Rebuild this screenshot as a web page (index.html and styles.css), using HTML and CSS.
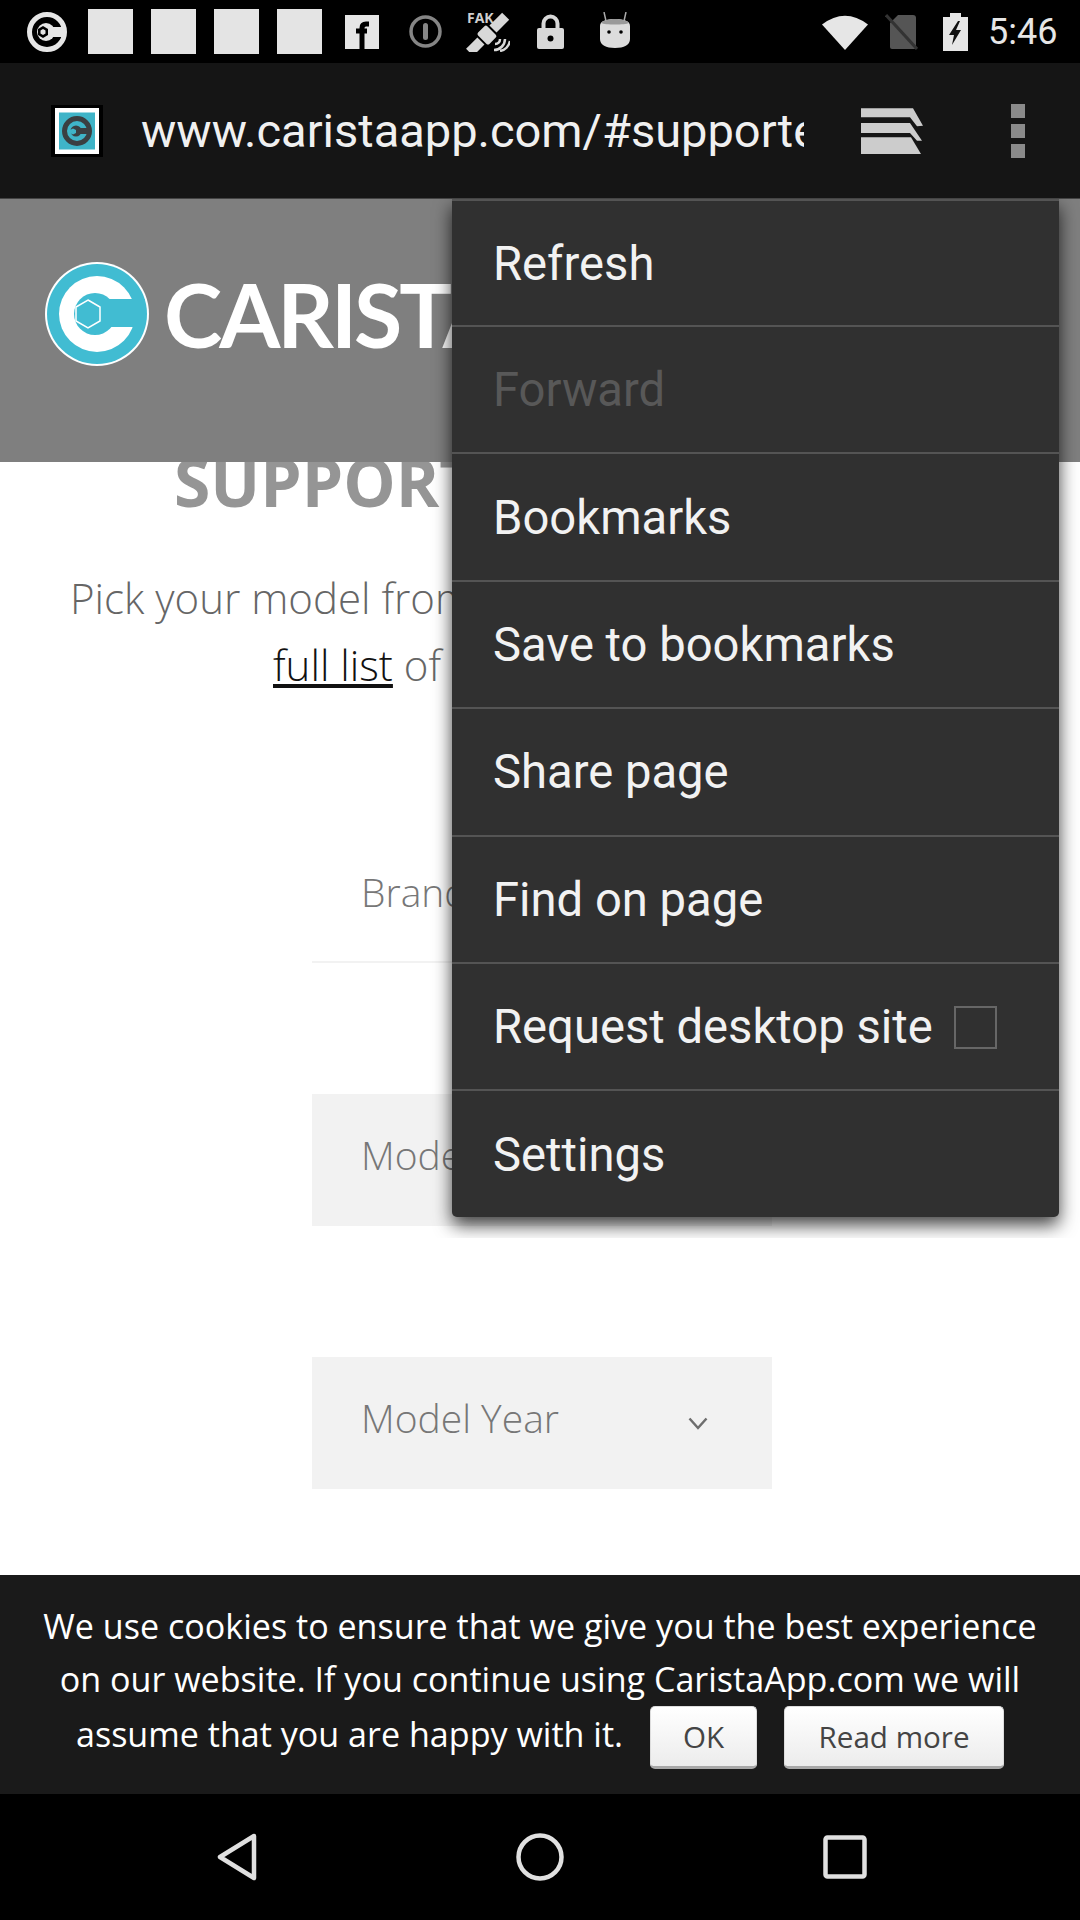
FILE: index.html
```html
<!DOCTYPE html>
<html lang="en">
<head>
    <meta charset="UTF-8">
    <meta name="viewport" content="width=device-width, initial-scale=1.0">
    <title>Carista - Supported cars</title>
    <link rel="stylesheet" href="styles.css">
</head>
<body>

    <div class="status-bar">
        <svg class="ic-carista" viewBox="0 0 42 40">
            <circle cx="21" cy="20" r="17.5" fill="none" stroke="#e6e6e6" stroke-width="5"/>
            <circle cx="20" cy="20" r="9" fill="#e6e6e6"/>
            <rect x="20" y="15" width="20" height="10" fill="#e6e6e6"/>
            <polygon points="17,14 22,17 22,23 17,26 12,23 12,17" fill="#000"/>
            <polygon points="17,17 19.5,18.5 19.5,21.5 17,23 14.500,21.500 14.500,18.500" fill="#e6e6e6"/>
        </svg>
        <div class="blank-note"></div>
        <div class="blank-note"></div>
        <div class="blank-note"></div>
        <div class="blank-note"></div>
        <svg class="ic-fb" viewBox="0 0 34 34">
            <rect width="34" height="34" fill="#e6e6e6"/>
            <path d="M24 9h-3c-2.500 0-4 1.500-4 4v21M11 16h11" fill="none" stroke="#000" stroke-width="5"/>
        </svg>
        <svg class="ic-info" viewBox="0 0 33 33">
            <circle cx="16.500" cy="16.500" r="14.500" fill="none" stroke="#858585" stroke-width="3.500"/>
            <rect x="14" y="8" width="5" height="17" rx="2.500" fill="#858585"/>
        </svg>
        <svg class="ic-gps" viewBox="0 0 44 41">
            <text class="gps-label" x="1" y="12">FAK</text>
            <g transform="rotate(-45 22 23)" fill="#d8d8d8">
                <rect x="-4" y="18" width="16" height="10"/>
                <rect x="14" y="15" width="13" height="16" rx="2"/>
                <rect x="29" y="18" width="18" height="10"/>
            </g>
            <path d="M28 39c6 0 11-5 11-11M29 33c3 0 5-2 5-5M34 40c5-1 9-5 10-10" fill="none" stroke="#d8d8d8" stroke-width="2.500"/>
        </svg>
        <svg class="ic-lock" viewBox="0 0 27 35">
            <path d="M6.500 16V9.500a7 7 0 0 1 14 0V16" fill="none" stroke="#d8d8d8" stroke-width="4"/>
            <rect y="14" width="27" height="21" rx="2" fill="#d8d8d8"/>
            <circle cx="13.500" cy="24.500" r="3" fill="#000"/>
        </svg>
        <svg class="ic-droid" viewBox="0 0 30 36">
            <path d="M6 9L4 0M24 9l2-9" stroke="#aaa" stroke-width="1.500"/>
            <path d="M0 14c0-5 6-7 15-7s15 2 15 7v13c0 6-6 9-15 9S0 33 0 27z" fill="#dcdcdc"/>
            <path d="M1 11c3-3 8-4 14-4s11 1 14 4c-4 2-24 2-28 0z" fill="#9a9a9a"/>
            <circle cx="9" cy="20" r="1.800" fill="#000"/>
            <circle cx="21" cy="20" r="1.800" fill="#000"/>
        </svg>

        <svg class="ic-wifi" viewBox="0 0 46 36">
            <path d="M0 10.500Q23-7 46 10.500L23 36z" fill="#e6e6e6"/>
        </svg>
        <svg class="ic-sim" viewBox="0 0 33 36">
            <path d="M13 1h15a3 3 0 0 1 3 3v29a2 2 0 0 1-2 2H7a2 2 0 0 1-2-2V9z" fill="#555"/>
            <path d="M1 1l31 34" stroke="#333" stroke-width="3"/>
        </svg>
        <svg class="ic-battery" viewBox="0 0 25 38">
            <path d="M7 0h11v4h7v34H0V4h7z" fill="#e6e6e6"/>
            <path d="M15 8L6 22h5l-2 10 9-15h-5l4-9z" fill="#111"/>
        </svg>
        <span class="clock">5:46</span>
    </div>

    <div class="toolbar">
        <div class="favicon">
            <svg viewBox="0 0 36 37">
                <rect width="36" height="37" fill="#3fb4c8"/>
                <circle cx="18" cy="18.500" r="12.500" fill="none" stroke="#3a3f42" stroke-width="5"/>
                <circle cx="17" cy="18.500" r="5.500" fill="#3a3f42"/>
                <rect x="17" y="15.500" width="15" height="6" fill="#3a3f42"/>
                <polygon points="14,16 17,17.500 17,20.500 14,22 11,20.500 11,17.500" fill="#3fb4c8"/>
            </svg>
        </div>
        <div class="url">www.caristaapp.com/#supported</div>
        <svg class="ic-tabs" viewBox="0 0 62 48">
            <polygon points="0,1.300 52,1.300 62,18.700 56,19.300 49,10.300 0,10.300"/>
            <polygon points="0,16 49,16 61,33.700 56,33.700 49,26 0,26"/>
            <polygon points="0,30.300 50,30.300 60,47 0,47"/>
        </svg>
        <div class="overflow-dots">
            <span></span>
            <span></span>
            <span></span>
        </div>
    </div>

    <div class="page">
        <div class="site-header">
            <svg class="site-logo" viewBox="0 0 106 106">
                <circle cx="53" cy="53" r="52" fill="#fff"/>
                <circle cx="53" cy="53" r="50" fill="#41bcd2"/>
                <circle cx="53" cy="53" r="38" fill="#fff"/>
                <circle cx="51" cy="53" r="21" fill="#41bcd2"/>
                <rect x="51" y="38" width="50" height="28" fill="#41bcd2"/>
                <polygon points="44,39 56,46 56,60 44,67 32,60 32,46" fill="#41bcd2" stroke="#fff" stroke-width="1.500"/>
            </svg>
            <span class="site-name">CARISTA</span>
        </div>

        <h1 class="title">SUPPORT</h1>
        <p class="intro intro-first">Pick your model from</p>
        <p class="intro intro-second"><a class="intro-link" href="#">full list</a> of</p>

        <div class="select select-plain">Brand</div>
        <div class="select select-filled">Model</div>
        <div class="select select-filled">
            Model Year
            <svg class="chevron" viewBox="0 0 20 13">
                <path d="M1.500 1.500L10 11l8.500-9.500" fill="none" stroke="#6e6e6e" stroke-width="2.500"/>
            </svg>
        </div>

        <div class="menu-clip">
            <ul class="menu">
                <li>Refresh</li>
                <li class="disabled">Forward</li>
                <li>Bookmarks</li>
                <li>Save to bookmarks</li>
                <li>Share page</li>
                <li>Find on page</li>
                <li>Request desktop site <span class="check"></span></li>
                <li>Settings</li>
            </ul>
        </div>
    </div>

    <div class="cookie-bar">
        <div class="cookie-line">We use cookies to ensure that we give you the best experience</div>
        <div class="cookie-line">on our website. If you continue using CaristaApp.com we will</div>
        <div class="cookie-line cookie-last">
            <span>assume that you are happy with it.</span>
            <button type="button" class="btn btn-ok">OK</button>
            <button type="button" class="btn btn-more">Read more</button>
        </div>
    </div>

    <div class="nav-bar">
        <svg class="nav-back" viewBox="0 0 42 50">
            <path d="M38 4L4 25l34 21z" fill="none" stroke="#e0e0e0" stroke-width="4.500" stroke-linejoin="round"/>
        </svg>
        <svg class="nav-home" viewBox="0 0 48 48">
            <circle cx="24" cy="24" r="21.500" fill="none" stroke="#e0e0e0" stroke-width="4.500"/>
        </svg>
        <svg class="nav-recent" viewBox="0 0 44 44">
            <rect x="2.500" y="2.500" width="39" height="39" rx="2" fill="none" stroke="#e0e0e0" stroke-width="4.500"/>
        </svg>
    </div>

</body>
</html>
```

FILE: styles.css
```css
body {
    margin: 0;
    width: 1080px;
    height: 1920px;
    overflow: hidden;
    display: flex;
    flex-direction: column;
    background-color: #fff;
    font-family: "Open Sans", sans-serif;
}

/* status bar */
.status-bar {
    height: 63px;
    flex: none;
    display: flex;
    align-items: center;
    padding-left: 26px;
    background-color: #000;
}

.ic-carista { width: 42px; height: 40px; margin-right: 20px; }

.blank-note {
    width: 45px;
    height: 45px;
    margin-right: 18px;
    background-color: #e4e4e4;
}

.ic-fb { width: 34px; height: 34px; margin-left: 5px; }
.ic-info { width: 33px; height: 33px; margin-left: 30px; }
.ic-gps { width: 44px; height: 41px; margin-left: 24px; }
.ic-lock { width: 27px; height: 35px; margin-left: 27px; }
.ic-droid { width: 30px; height: 36px; margin-left: 36px; margin-top: -4px; }
.ic-wifi { width: 46px; height: 36px; margin-left: 192px; }
.ic-sim { width: 33px; height: 36px; margin-left: 17px; }
.ic-battery { width: 25px; height: 38px; margin-left: 25px; }

.gps-label {
    font-family: "Open Sans", sans-serif;
    font-size: 14px;
    font-weight: 700;
    fill: #cfcfcf;
}

.clock {
    margin-left: 20px;
    font-family: Roboto, sans-serif;
    font-size: 36px;
    color: #e6e6e6;
}

/* browser toolbar */
.toolbar {
    height: 136px;
    flex: none;
    box-sizing: border-box;
    display: flex;
    align-items: center;
    padding-left: 51px;
    background-color: #151515;
    border-bottom: 1px solid #444;
}

.favicon {
    width: 52px;
    height: 52px;
    box-sizing: border-box;
    padding: 3px 4px;
    background-color: #000;
}

.favicon svg {
    display: block;
    width: 44px;
    height: 46px;
    box-sizing: border-box;
    padding: 4px;
    background-color: #fff;
}

.url {
    width: 663px;
    margin-left: 38px;
    overflow: hidden;
    white-space: nowrap;
    font-family: Roboto, sans-serif;
    font-size: 47px;
    color: #f0f0f0;
}

.ic-tabs {
    width: 62px;
    height: 48px;
    margin-left: 57px;
    fill: #cccccc;
}

.overflow-dots {
    display: flex;
    flex-direction: column;
    gap: 6px;
    margin-left: 88px;
}

.overflow-dots span {
    width: 14px;
    height: 14px;
    background-color: #8a8a8a;
}

/* page under the menu */
.page {
    position: relative;
    flex: 1;
    min-height: 0;
    overflow: hidden;
}

.site-header {
    height: 263px;
    box-sizing: border-box;
    display: flex;
    align-items: center;
    padding-left: 44px;
    padding-bottom: 33px;
    background-color: #7f7f7f;
    white-space: nowrap;
}

.site-logo { width: 106px; height: 106px; flex: none; }

.site-name {
    margin-left: 14px;
    font-family: Lato, sans-serif;
    font-size: 88px;
    font-weight: 700;
    letter-spacing: -3px;
    color: #fff;
}

.title {
    height: 60px;
    margin: 0;
    overflow: hidden;
    padding-left: 174px;
    font-size: 66px;
    font-weight: 700;
    line-height: 39px;
    color: #959595;
}

.intro {
    margin: 0;
    font-size: 42px;
    font-weight: 300;
    color: #666;
    white-space: nowrap;
}

.intro-first { padding: 43px 0 0 70px; line-height: 66px; }
.intro-second { padding-left: 273px; line-height: 67px; }

.intro-link {
    color: #111;
    text-decoration: underline;
}

.select {
    position: relative;
    width: 460px;
    height: 132px;
    box-sizing: border-box;
    margin-left: 312px;
    padding: 35px 0 0 49px;
    font-size: 39px;
    font-weight: 300;
    line-height: 52px;
    color: #777;
}

.select-plain {
    margin-top: 133px;
    margin-bottom: 131px;
    border-bottom: 2px solid #f2f2f2;
}

.select-filled {
    margin-bottom: 131px;
    background-color: #f2f2f2;
}

.chevron {
    position: absolute;
    left: 376px;
    top: 60px;
    width: 20px;
    height: 13px;
}

/* overflow menu, its shadow stops short of the screen edge */
.menu-clip {
    position: absolute;
    top: 0;
    right: 0;
    width: 650px;
    height: 1039px;
    overflow: hidden;
}

.menu {
    width: 607px;
    margin: 0 0 0 22px;
    padding: 0;
    list-style: none;
    background-color: #303030;
    border-radius: 0 0 5px 5px;
    box-shadow: 0 8px 18px rgba(0, 0, 0, 0.75);
    font-family: Roboto, sans-serif;
    font-size: 47.2px;
    color: #f2f2f2;
}

.menu li {
    height: 127.4px;
    box-sizing: border-box;
    display: flex;
    align-items: center;
    padding: 1px 0 0 41px;
    border-top: 2px solid #545454;
}

.menu li:first-child { height: 126px; }

.menu .disabled { color: #585858; }

.check {
    width: 43px;
    height: 43px;
    box-sizing: border-box;
    margin-left: 21px;
    border: 2px solid #666;
}

/* cookie notice */
.cookie-bar {
    height: 219px;
    flex: none;
    box-sizing: border-box;
    padding-top: 25px;
    background-color: #1a1a1a;
    color: #fff;
    font-size: 34.1px;
    line-height: 53px;
    text-align: center;
}

.cookie-last {
    display: flex;
    justify-content: center;
    align-items: center;
    height: 63px;
}

.cookie-last span { margin-bottom: 7px; }

.btn {
    height: 63px;
    box-sizing: border-box;
    padding: 0;
    background: linear-gradient(#fff, #ececec);
    border: 1px solid #ddd;
    border-bottom: 3px solid #a8a8a8;
    border-radius: 5px;
    font-family: "Open Sans", sans-serif;
    font-size: 29.6px;
    color: #444;
}

.btn-ok { width: 107px; margin-left: 27px; }
.btn-more { width: 220px; margin-left: 27px; }

/* navigation bar */
.nav-bar {
    height: 126px;
    flex: none;
    display: flex;
    align-items: center;
    background-color: #000;
}

.nav-back { width: 42px; height: 50px; margin-left: 216px; }
.nav-home { width: 48px; height: 48px; margin-left: 258px; }
.nav-recent { width: 44px; height: 44px; margin-left: 259px; }
```
